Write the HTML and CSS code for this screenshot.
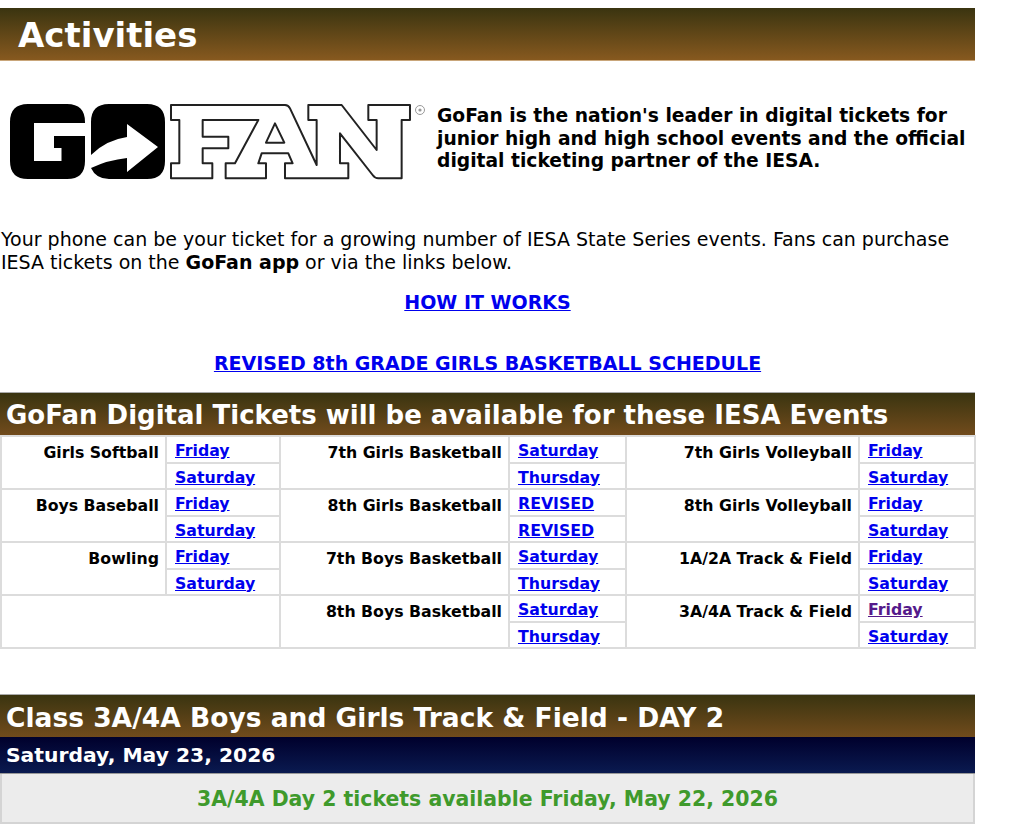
FILE: index.html
```html
<!DOCTYPE html>
<html lang="en">

<head>
    <meta charset="UTF-8">
    <meta name="viewport" content="width=device-width, initial-scale=1.0">
    <title>Activities</title>
    <link rel="stylesheet" href="styles.css">
</head>

<body>
    <div class="page">
        <h1 class="page-title">Activities</h1>

        <div class="intro">
            <svg class="logo" width="437" height="90" viewBox="0 0 437 90" role="img" aria-label="GoFan">
                <g transform="translate(0 -100)">
                    <path fill="#000" fill-rule="evenodd" d="M28,104H67Q85,104 85,122V161Q85,179 67,179H28Q10,179 10,161V122Q10,104 28,104ZM34,123V161H61.5V148H54V136H85V123Z"/>
                    <path fill="#000" d="M109,104H147Q165,104 165,122V161Q165,179 147,179H109Q96,179 91,168Q108,160 127,158V172L158,147L127,124V137Q106,140 91,155V122Q91,104 109,104Z"/>
                    <g transform="translate(160 95) scale(.3333)" fill="#fff" stroke="#222" stroke-width="6" stroke-linejoin="round">
                        <path d="M33,30H375Q385,30 390,40L470,210V75H445V30H545L650,165V75H625V30H750V75H725V250H655Q645,250 638,240L540,115V205H565V250H375V205H398L385,175H305L295,205H318V250H197V205H225L295,75H128V125H205V160H128V205H157V250H33V205H58V75H33Z"/>
                        <path d="M345,85L373,143H318Z"/>
                    </g>
                    <circle cx="420" cy="110" r="4.5" fill="#fff" stroke="#999" stroke-width="1"/>
                    <circle cx="420" cy="110" r="1.6" fill="#999"/>
                </g>
            </svg>
            <p class="intro-text">GoFan is the nation's leader in digital tickets for junior high and high school events and the official digital ticketing partner of the IESA.</p>
        </div>

        <p class="lead">Your phone can be your ticket for a growing number of IESA State Series events. Fans can purchase IESA tickets on the <b>GoFan app</b> or via the links below.</p>

        <p class="center-link how"><a href="#">HOW IT WORKS</a></p>
        <p class="center-link revised"><a href="#">REVISED 8th GRADE GIRLS BASKETBALL SCHEDULE</a></p>

        <h2 class="bar">GoFan Digital Tickets will be available for these IESA Events</h2>
        <table class="events">
            <colgroup>
                <col class="c1"><col class="c2"><col class="c3"><col class="c4"><col class="c5"><col class="c6">
            </colgroup>
            <tbody>
                <tr>
                    <th rowspan="2">Girls Softball</th><td><a href="#">Friday</a></td>
                    <th rowspan="2">7th Girls Basketball</th><td><a href="#">Saturday</a></td>
                    <th rowspan="2">7th Girls Volleyball</th><td><a href="#">Friday</a></td>
                </tr>
                <tr>
                    <td><a href="#">Saturday</a></td>
                    <td><a href="#">Thursday</a></td>
                    <td><a href="#">Saturday</a></td>
                </tr>
                <tr>
                    <th rowspan="2">Boys Baseball</th><td><a href="#">Friday</a></td>
                    <th rowspan="2">8th Girls Basketball</th><td><a href="#">REVISED</a></td>
                    <th rowspan="2">8th Girls Volleyball</th><td><a href="#">Friday</a></td>
                </tr>
                <tr>
                    <td><a href="#">Saturday</a></td>
                    <td><a href="#">REVISED</a></td>
                    <td><a href="#">Saturday</a></td>
                </tr>
                <tr>
                    <th rowspan="2">Bowling</th><td><a href="#">Friday</a></td>
                    <th rowspan="2">7th Boys Basketball</th><td><a href="#">Saturday</a></td>
                    <th rowspan="2">1A/2A Track &amp; Field</th><td><a href="#">Friday</a></td>
                </tr>
                <tr>
                    <td><a href="#">Saturday</a></td>
                    <td><a href="#">Thursday</a></td>
                    <td><a href="#">Saturday</a></td>
                </tr>
                <tr>
                    <th rowspan="2" colspan="2"></th>
                    <th rowspan="2">8th Boys Basketball</th><td><a href="#">Saturday</a></td>
                    <th rowspan="2">3A/4A Track &amp; Field</th><td><a class="visited" href="#">Friday</a></td>
                </tr>
                <tr>
                    <td><a href="#">Thursday</a></td>
                    <td><a href="#">Saturday</a></td>
                </tr>
            </tbody>
        </table>

        <h2 class="bar bar-day">Class 3A/4A Boys and Girls Track &amp; Field - DAY 2</h2>
        <h3 class="date-bar">Saturday, May 23, 2026</h3>
        <div class="notice">3A/4A Day 2 tickets available Friday, May 22, 2026</div>
    </div>
</body>

</html>
```

FILE: styles.css
```css
body {
    font-family: 'DejaVu Sans', Verdana, sans-serif;
    margin: 8px 0 0 0;
    background-color: #fff;
    color: #000;
}

.page {
    width: 975px;
}

.page-title {
    margin: 0;
    height: 53px;
    padding-left: 18px;
    box-sizing: border-box;
    font-size: 34px;
    line-height: 55px;
    color: #fff;
    background: linear-gradient(#3a3410, #87591f);
    border-bottom: 1px solid #c9a67a;
}

.intro {
    display: flex;
    align-items: flex-start;
    margin-top: 39px;
    height: 100px;
}

.logo {
    display: block;
    flex: none;
    width: 437px;
    height: 90px;
    filter: blur(0.4px);
}

.intro-text {
    margin: 5px 0 0 0;
    width: 536px;
    font-size: 18.7px;
    font-weight: bold;
    line-height: 22.5px;
}

.lead {
    margin: 28px 0 0 1px;
    font-size: 19px;
    line-height: 23px;
}

.center-link {
    margin: 0;
    text-align: center;
    font-size: 19px;
    font-weight: bold;
    line-height: 24px;
}

.how {
    margin-top: 16px;
}

.revised {
    margin-top: 37px;
}

a {
    color: #0000ee;
}

a.visited {
    color: #551a8b;
}

.bar {
    margin: 17px 0 0 0;
    height: 43px;
    padding-left: 6px;
    box-sizing: border-box;
    font-size: 26px;
    line-height: 45px;
    color: #fff;
    background: linear-gradient(#3a3410, #714b1c);
    border-top: 1px solid #aaa;
}

.events {
    width: 974px;
    height: 214px;
    table-layout: fixed;
    border-collapse: collapse;
    font-size: 15.75px;
    font-weight: bold;
}

.c1 { width: 165px; }
.c2 { width: 114px; }
.c3 { width: 229px; }
.c4 { width: 117px; }
.c5 { width: 233px; }
.c6 { width: 116px; }

.events th, .events td {
    border: 2px solid #dcdcdc;
    padding: 0 8px;
    line-height: 21px;
}

.events th {
    text-align: right;
    vertical-align: top;
    padding: 5px 6px 0 0;
}

.events td {
    text-align: left;
    vertical-align: top;
    padding-top: 3px;
}

.bar-day {
    margin-top: 45px;
    font-size: 26.5px;
}

.date-bar {
    margin: 0;
    height: 37px;
    padding-left: 6px;
    box-sizing: border-box;
    font-size: 20.3px;
    line-height: 37px;
    color: #fff;
    background: linear-gradient(#00002c, #0a1a50);
    border-bottom: 1px solid #999;
}

.notice {
    height: 50px;
    box-sizing: border-box;
    text-align: center;
    font-size: 20.45px;
    font-weight: bold;
    line-height: 50px;
    color: #3f9a2c;
    background-color: #ececec;
    border: 2px solid #d4d4d4;
    border-top: 0;
}
```
